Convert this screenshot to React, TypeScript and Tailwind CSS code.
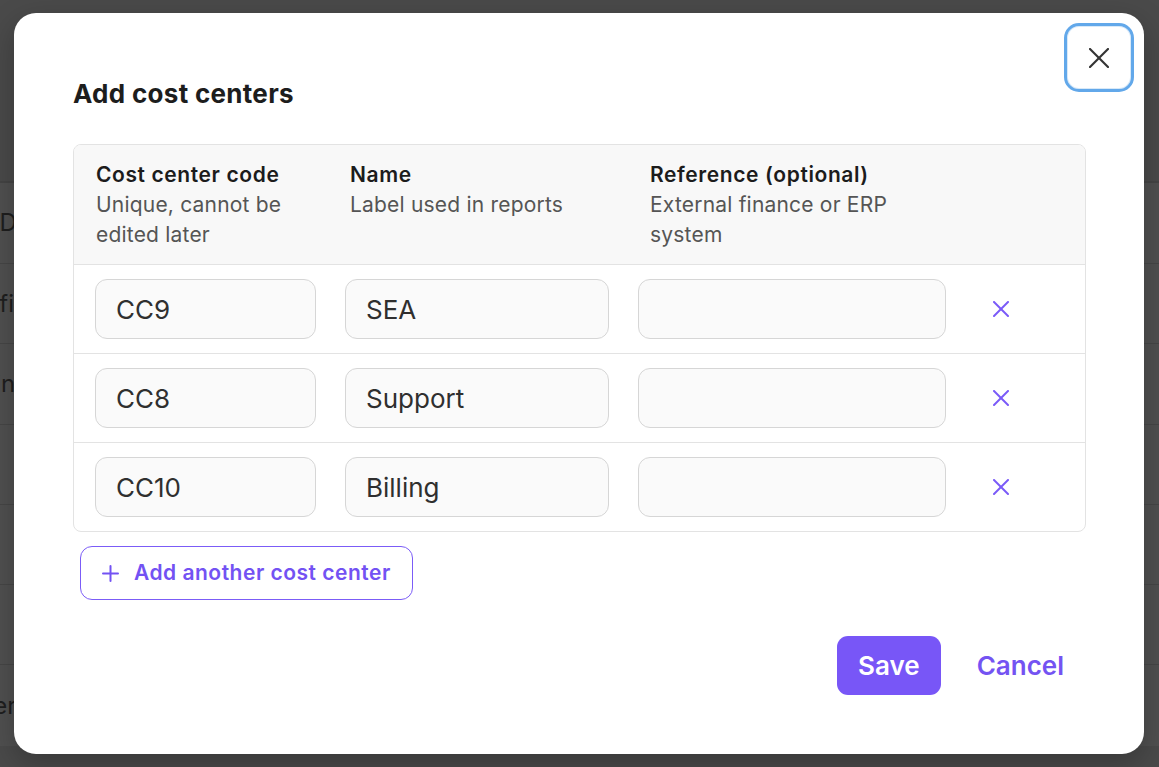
import React from "react";

function XIcon({ size, color, stroke }: { size: number; color: string; stroke: number }) {
  return (
    <svg width={size} height={size} viewBox={`0 0 ${size} ${size}`} fill="none">
      <line x1={1} y1={1} x2={size - 1} y2={size - 1} stroke={color} strokeWidth={stroke} strokeLinecap="round" />
      <line x1={size - 1} y1={1} x2={1} y2={size - 1} stroke={color} strokeWidth={stroke} strokeLinecap="round" />
    </svg>
  );
}

const rows = [
  { code: "CC9", name: "SEA" },
  { code: "CC8", name: "Support" },
  { code: "CC10", name: "Billing" },
];

export default function App() {
  return (
    <div className="relative h-[767px] w-[1159px] overflow-hidden bg-[#4e4e4e] font-['Inter','Noto_Sans',sans-serif]">
      {/* dimmed page behind the dialog */}
      <div className="flex flex-col">
        <div className="h-[183px] border-b-2 border-[#444444] bg-[#4a4a4a]" />
        <div className="flex h-[81px] items-center border-b border-[#464646] bg-[#505050]">
          <span className="ml-[-7px] whitespace-nowrap text-[24px] text-[#1e1e1e]">ID</span>
        </div>
        <div className="flex h-[80px] items-center border-b border-[#464646] bg-[#505050]">
          <span className="ml-[-39px] whitespace-nowrap text-[24px] text-[#1e1e1e]">Profile</span>
        </div>
        <div className="flex h-[81px] items-center border-b border-[#464646] bg-[#505050]">
          <span className="ml-[-57px] whitespace-nowrap text-[24px] text-[#1e1e1e]">Admin</span>
        </div>
        <div className="h-[80px] border-b border-[#464646] bg-[#505050]" />
        <div className="h-[80px] border-b border-[#464646] bg-[#505050]" />
        <div className="h-[80px] border-b border-[#464646] bg-[#505050]" />
        <div className="flex h-[81px] items-center bg-[#505050]">
          <span className="ml-[-67px] whitespace-nowrap text-[24px] text-[#1e1e1e]">Partner</span>
        </div>
        <div className="h-[40px] bg-[#4a4a4a]" />
      </div>

      {/* dialog */}
      <div className="absolute left-[14px] top-[13px] h-[741px] w-[1130px] rounded-[22px] bg-white pl-[59px] pr-[58px] pt-[65px] shadow-[0_10px_30px_rgba(0,0,0,0.25)]">
        <button className="absolute right-[10px] top-[10px] flex h-[69px] w-[70px] items-center justify-center rounded-[15px] border-[3px] border-[#62a8ea] bg-white shadow-[inset_0_0_0_1px_#d8e9f8]">
          <XIcon size={20} color="#333333" stroke={2.2} />
        </button>

        <h2 className="text-[26px] font-bold leading-[32px] tracking-[0.3px] text-[#1d1d1d]">Add cost centers</h2>

        <div className="mt-[34px] overflow-hidden rounded-[8px] border border-[#e3e3e3]">
          <div className="flex border-b border-[#e3e3e3] bg-[#f8f8f8] pb-[14px] pl-[22px] pt-[15px]">
            <div className="w-[254px] pr-[24px]">
              <div className="text-[21px] font-semibold leading-[30px] tracking-[0.6px] text-[#1c1c1c]">Cost center code</div>
              <div className="text-[21px] leading-[30px] tracking-[0.2px] text-[#555555]">Unique, cannot be edited later</div>
            </div>
            <div className="w-[300px] pr-[24px]">
              <div className="text-[21px] font-semibold leading-[30px] tracking-[0.6px] text-[#1c1c1c]">Name</div>
              <div className="text-[21px] leading-[30px] tracking-[0.2px] text-[#555555]">Label used in reports</div>
            </div>
            <div className="w-[296px] pr-[16px]">
              <div className="text-[21px] font-semibold leading-[30px] tracking-[0.6px] text-[#1c1c1c]">Reference (optional)</div>
              <div className="text-[21px] leading-[30px] tracking-[0.2px] text-[#555555]">External finance or ERP system</div>
            </div>
          </div>

          {rows.map((r, i) => (
            <div
              key={r.code}
              className={`flex items-center py-[14px] pl-[21px] ${i < rows.length - 1 ? "border-b border-[#e3e3e3]" : ""}`}
            >
              <input
                readOnly
                defaultValue={r.code}
                className="h-[60px] w-[221px] rounded-[12px] border border-[#d6d6d6] bg-[#fafafa] px-[20px] text-[26px] text-[#2f2f2f] outline-none"
              />
              <input
                readOnly
                defaultValue={r.name}
                className="ml-[29px] h-[60px] w-[264px] rounded-[12px] border border-[#d6d6d6] bg-[#fafafa] px-[20px] text-[26px] text-[#2f2f2f] outline-none"
              />
              <input
                readOnly
                defaultValue=""
                className="ml-[29px] h-[60px] w-[308px] rounded-[12px] border border-[#d6d6d6] bg-[#fafafa] px-[20px] text-[26px] text-[#2f2f2f] outline-none"
              />
              <div className="flex w-[110px] justify-center">
                <XIcon size={16} color="#7a5af8" stroke={2} />
              </div>
            </div>
          ))}
        </div>

        <button className="ml-[7px] mt-[14px] flex h-[54px] items-center gap-[15px] rounded-[12px] border border-[#7b5cf7] pl-[21px] pr-[21px] text-[21px] font-semibold tracking-[0.5px] text-[#7352f3]">
          <svg width="17" height="17" viewBox="0 0 17 17" fill="none">
            <line x1="8.5" y1="1" x2="8.5" y2="16" stroke="#7352f3" strokeWidth="2" strokeLinecap="round" />
            <line x1="1" y1="8.5" x2="16" y2="8.5" stroke="#7352f3" strokeWidth="2" strokeLinecap="round" />
          </svg>
          <span>Add another cost center</span>
        </button>

        <div className="mt-[36px] flex justify-end gap-[14px]">
          <button className="h-[59px] rounded-[11px] bg-[#7856f7] px-[21px] text-[26px] font-semibold text-white">Save</button>
          <button className="h-[59px] px-[22px] text-[26px] font-semibold text-[#7453f2]">Cancel</button>
        </div>
      </div>
    </div>
  );
}
